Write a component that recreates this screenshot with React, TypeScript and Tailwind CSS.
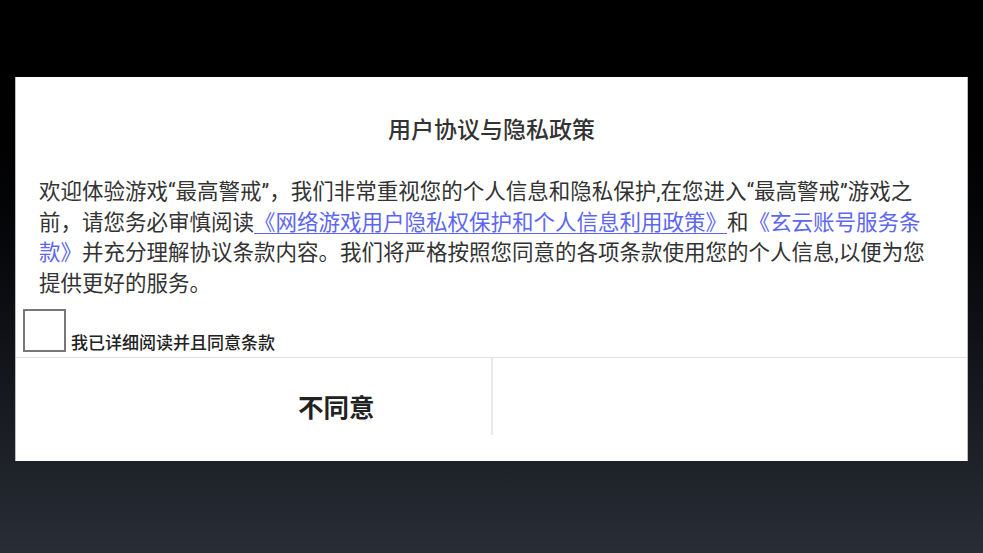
import React from "react";

export default function App() {
  const font = { fontFamily: 'Roboto, "Noto Sans CJK SC", sans-serif' };
  return (
    <div
      className="w-[983px] h-[553px] bg-gradient-to-b from-[#000000] to-[#292d36] pt-[77px] pl-[15px] overflow-hidden"
      style={font}
    >
      <div className="w-[953px] h-[384px] bg-white border-x border-[#bdbdbd] flex flex-col">
        <div className="pt-[39px] h-[69px] text-center text-[23px] leading-[30px] font-medium text-[#333333]">
          用户协议与隐私政策
        </div>
        <div className="mt-[31px] pl-[23px] text-[21.5px] leading-[30.5px] text-[#333333] whitespace-nowrap">
          欢迎体验游戏“最高警戒”，我们非常重视您的个人信息和隐私保护,在您进入“最高警戒”游戏之
          <br />
          前，请您务必审慎阅读
          <span className="text-[#5c66f2] underline decoration-1 underline-offset-[3px]">
            《网络游戏用户隐私权保护和个人信息利用政策》
          </span>
          和<span className="text-[#5c66f2]">《玄云账号服务条</span>
          <br />
          <span className="text-[#5c66f2]">款》</span>并充分理解协议条款内容。我们将严格按照您同意的各项条款使用您的个人信息,以便为您
          <br />
          提供更好的服务。
        </div>
        <div className="mt-[10px] pl-[7px] flex items-end gap-[5px]">
          <div className="w-[43px] h-[43px] border-2 border-[#777777] bg-white shrink-0" />
          <div className="text-[17px] leading-[20px] font-medium text-[#222222] mb-[-1px]">
            我已详细阅读并且同意条款
          </div>
        </div>
        <div className="mt-[5px] border-t border-[#e2e2e2] flex h-[78px]">
          <div className="w-[475px] pl-[282px] pt-[35px] text-[25.5px] leading-[30px] font-bold text-[#222222]">
            不同意
          </div>
          <div className="w-[2px] bg-[#e8e8e8]" />
          <div className="flex-1" />
        </div>
      </div>
    </div>
  );
}
